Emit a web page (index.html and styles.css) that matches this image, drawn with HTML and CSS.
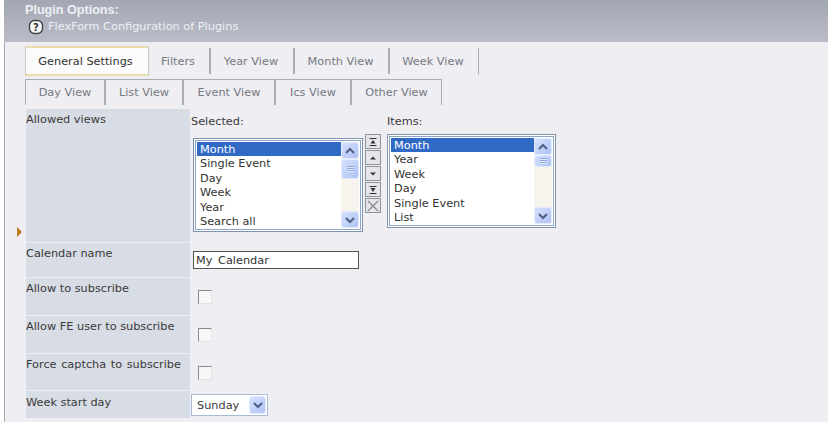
FILE: index.html
```html
<!DOCTYPE html>
<html>

<head>
    <title>Plugin Options</title>
    <link rel="stylesheet" href="styles.css">
</head>

<body>
    <svg class="defs" width="0" height="0">
        <symbol id="chev-up" viewBox="0 0 10 8"><path d="M1 6 L5 2 L9 6" fill="none" stroke="#4d6185" stroke-width="2"/></symbol>
        <symbol id="chev-down" viewBox="0 0 10 8"><path d="M1 2 L5 6 L9 2" fill="none" stroke="#4d6185" stroke-width="2"/></symbol>
    </svg>

    <div class="panel">
        <div class="head">
            <div class="head-title">Plugin Options:</div>
            <div class="head-sub">
                <svg class="help" width="16" height="16" viewBox="0 0 16 16">
                    <rect x="1.5" y="1.5" width="13" height="13" rx="5" fill="#f4f4f4" stroke="#444" stroke-width="1.4"/>
                    <text x="8" y="12" text-anchor="middle" class="help-q">?</text>
                </svg>
                FlexForm Configuration of Plugins
            </div>
        </div>

        <div class="tabs tabs-top">
            <div class="tab active">General Settings</div>
            <div class="tab tab-filters">Filters</div>
            <div class="tab tab-year">Year View</div>
            <div class="tab tab-month">Month View</div>
            <div class="tab tab-week">Week View</div>
        </div>
        <div class="tabs tabs-bottom">
            <div class="tab2 tab-day">Day View</div>
            <div class="tab2 tab-list">List View</div>
            <div class="tab2 tab-event">Event View</div>
            <div class="tab2 tab-ics">Ics View</div>
            <div class="tab2 tab-other">Other View</div>
        </div>

        <div class="form">
            <div class="row row-views">
                <div class="marker"><span class="arrow"></span></div>
                <div class="label">Allowed views</div>
                <div class="value pickers">
                    <div class="picker-selected">
                        <div class="picker-title">Selected:</div>
                        <div class="listbox">
                            <div class="list-items">
                                <div class="item sel">Month</div>
                                <div class="item">Single Event</div>
                                <div class="item">Day</div>
                                <div class="item">Week</div>
                                <div class="item">Year</div>
                                <div class="item">Search all</div>
                            </div>
                            <div class="scrollbar">
                                <div class="sb-btn"><svg width="10" height="8"><use href="#chev-up"/></svg></div>
                                <div class="sb-thumb thumb-long"><span class="grip"></span></div>
                                <div class="sb-space"></div>
                                <div class="sb-btn"><svg width="10" height="8"><use href="#chev-down"/></svg></div>
                            </div>
                        </div>
                    </div>
                    <div class="movers">
                        <div class="mover"><svg width="10" height="10" viewBox="0 0 10 10"><path d="M1.5 1.5 H8.5 M1.5 8.5 H8.5" stroke="#333" stroke-width="1.2"/><path d="M5 3 L7.5 6.5 H2.5 Z" fill="#333"/></svg></div>
                        <div class="mover"><svg width="10" height="10" viewBox="0 0 10 10"><path d="M5 3.5 L8 6.5 H2 Z" fill="#333"/></svg></div>
                        <div class="mover"><svg width="10" height="10" viewBox="0 0 10 10"><path d="M5 6.5 L8 3.5 H2 Z" fill="#333"/></svg></div>
                        <div class="mover"><svg width="10" height="10" viewBox="0 0 10 10"><path d="M1.5 1.5 H8.5 M1.5 8.5 H8.5" stroke="#333" stroke-width="1.2"/><path d="M5 7 L7.5 3 H2.5 Z" fill="#333"/></svg></div>
                        <div class="mover"><svg width="12" height="12" viewBox="0 0 12 12"><path d="M1 1 L11 11 M11 1 L1 11" stroke="#888" stroke-width="1.2"/></svg></div>
                    </div>
                    <div class="picker-items">
                        <div class="picker-title">Items:</div>
                        <div class="listbox">
                            <div class="list-items">
                                <div class="item sel">Month</div>
                                <div class="item">Year</div>
                                <div class="item">Week</div>
                                <div class="item">Day</div>
                                <div class="item">Single Event</div>
                                <div class="item">List</div>
                            </div>
                            <div class="scrollbar">
                                <div class="sb-btn"><svg width="10" height="8"><use href="#chev-up"/></svg></div>
                                <div class="sb-thumb thumb-short"><span class="grip"></span></div>
                                <div class="sb-space"></div>
                                <div class="sb-btn"><svg width="10" height="8"><use href="#chev-down"/></svg></div>
                            </div>
                        </div>
                    </div>
                </div>
            </div>

            <div class="row row-name">
                <div class="marker"></div>
                <div class="label">Calendar name</div>
                <div class="value"><input class="text-input" type="text" value="My Calendar"></div>
            </div>
            <div class="row row-check">
                <div class="marker"></div>
                <div class="label">Allow to subscribe</div>
                <div class="value"><input class="check" type="checkbox"></div>
            </div>
            <div class="row row-check">
                <div class="marker"></div>
                <div class="label">Allow FE user to subscribe</div>
                <div class="value"><input class="check" type="checkbox"></div>
            </div>
            <div class="row row-captcha">
                <div class="marker"></div>
                <div class="label label-wide">Force captcha to subscribe</div>
                <div class="value"><input class="check" type="checkbox"></div>
            </div>
            <div class="row row-week">
                <div class="marker"></div>
                <div class="label">Week start day</div>
                <div class="value">
                    <div class="dropdown">
                        <span class="dropdown-text">Sunday</span>
                        <span class="dropdown-btn"><svg width="10" height="8"><use href="#chev-down"/></svg></span>
                    </div>
                </div>
            </div>
        </div>
    </div>
</body>

</html>
```

FILE: styles.css
```css
html, body {
    margin: 0;
    padding: 0;
    height: 100%;
    overflow: hidden;
}

body {
    background-color: #ffffff;
    font-family: "DejaVu Sans", Verdana, sans-serif;
    font-size: 11.3px;
    color: #3a3a3a;
}

.defs {
    display: block;
    height: 0;
}

.panel {
    margin-left: 4px;
    height: 422px;
    background-color: #eeeef3;
    border-left: 1px solid #a4a7ae;
    box-sizing: border-box;
}

.head {
    height: 42px;
    margin-left: -1px;
    box-sizing: border-box;
    padding: 3px 0 0 21px;
    background: linear-gradient(#a3a7b3, #babdc8);
    color: #eef0f4;
}

.head-title {
    font-family: "Liberation Sans", Arial, sans-serif;
    font-weight: bold;
    font-size: 12.6px;
    line-height: 14px;
}

.head-sub {
    display: flex;
    align-items: center;
    gap: 4px;
    margin: 2px 0 0 3px;
    line-height: 16px;
}

.help-q {
    font-family: "DejaVu Sans", sans-serif;
    font-size: 10px;
    font-weight: bold;
    fill: #333;
}

.tabs {
    display: flex;
    margin-left: 20px;
}

.tabs-top {
    padding-top: 4px;
    height: 30px;
    box-sizing: content-box;
}

.tabs-bottom {
    padding-top: 3px;
    height: 26px;
}

.tab,
.tab2 {
    box-sizing: border-box;
    color: #777980;
    line-height: 26px;
    text-align: center;
    border-right: 2px solid #a9acb4;
}

.tab {
    height: 26px;
    margin-top: 2px;
    line-height: 28px;
    padding-right: 2px;
}

.tab.active {
    width: 124px;
    height: 30px;
    margin-top: 0;
    line-height: 28px;
    padding-right: 3px;
    color: #333;
    background-color: #fbfbfb;
    border-top: 2px solid #e8dcae;
    border-bottom: 2px solid #e8dcae;
    border-right: 1px solid #c9c9c9;
    border-left: 1px solid #c9c9c9;
}

.tab-filters { width: 62px; }
.tab-year { width: 84px; }
.tab-month { width: 95px; }
.tab-week { width: 89px; border-right-width: 1px; }

.tab2 {
    height: 26px;
    border-top: 1px solid #a9acb4;
}

.tab-day { width: 81px; border-left: 1px solid #a9acb4; }
.tab-list { width: 78px; }
.tab-event { width: 92px; }
.tab-ics { width: 76px; }
.tab-other { width: 90px; border-right-width: 1px; }

.form {
    padding-top: 4px;
}

.row {
    display: flex;
    margin-bottom: 1px;
    margin-left: -5px;
}

.marker {
    width: 26px;
    flex: none;
    display: flex;
    align-items: flex-end;
    justify-content: flex-start;
}

.arrow {
    width: 0;
    height: 0;
    margin: 0 0 5px 17px;
    border-left: 5px solid #c07a1a;
    border-top: 5px solid transparent;
    border-bottom: 5px solid transparent;
}

.label {
    width: 164px;
    flex: none;
    background-color: #d8dce4;
    line-height: 14px;
    padding-top: 4px;
    box-sizing: border-box;
}

.label-wide {
    word-spacing: 1px;
}

.value {
    flex: 1;
}

.row-views { height: 133px; }
.row-name { height: 34px; }
.row-check { height: 37px; }
.row-captcha { height: 36px; }
.row-week { height: 27px; }

.row-week .label {
    padding-top: 5px;
}

.pickers {
    display: flex;
    padding-left: 1px;
}

.picker-selected {
    width: 174px;
}

.picker-selected .picker-title {
    padding-top: 6px;
    height: 29px;
    line-height: 14px;
    box-sizing: border-box;
}

.picker-selected .listbox {
    margin-left: 2px;
    width: 170px;
    height: 94px;
}

.picker-items {
    margin-left: 6px;
}

.picker-items .picker-title {
    padding-top: 6px;
    height: 25px;
    line-height: 14px;
    box-sizing: border-box;
}

.picker-items .listbox {
    width: 169px;
    height: 94px;
}

.listbox {
    display: flex;
    box-sizing: border-box;
    border: 1px solid #7f93ab;
    padding: 3px;
    background-color: #fff;
    outline: 1px solid #8ca6c8;
    outline-offset: -3px;
}

.list-items {
    flex: 1;
    min-width: 0;
    overflow: hidden;
}

.item {
    height: 14.4px;
    line-height: 16px;
    padding-left: 3px;
    color: #333;
}

.item.sel {
    background-color: #316ac5;
    color: #fff;
}

.scrollbar {
    width: 18px;
    flex: none;
    display: flex;
    flex-direction: column;
    background-color: #f6f4ec;
}

.sb-btn,
.sb-thumb,
.dropdown-btn {
    display: flex;
    align-items: center;
    justify-content: center;
    background: linear-gradient(135deg, #d6e1fd, #aec2f6);
    border: 1px solid #e4ebfc;
    border-radius: 3px;
    box-sizing: border-box;
}

.sb-btn {
    height: 17px;
    flex: none;
}

.thumb-long { height: 20px; }
.thumb-short { height: 12px; }

.grip {
    width: 7px;
    height: 6px;
    background: repeating-linear-gradient(#8ea6dc 0, #8ea6dc 1px, #e4ebfd 1px, #e4ebfd 2px);
}

.sb-space {
    flex: 1;
}

.movers {
    display: flex;
    flex-direction: column;
    padding-top: 25px;
    gap: 1px;
    width: 16px;
}

.mover {
    width: 16px;
    height: 15px;
    flex: none;
    display: flex;
    align-items: center;
    justify-content: center;
    box-sizing: border-box;
    border: 1px solid #8f9299;
    background-color: #e6e6ea;
}

.text-input {
    display: block;
    margin: 8px 0 0 3px;
    width: 166px;
    height: 18px;
    box-sizing: border-box;
    border: 1px solid #555;
    background-color: #fff;
    padding: 0 0 0 2px;
    font-family: "DejaVu Sans", Verdana, sans-serif;
    font-size: 11.3px;
    word-spacing: 2px;
    color: #333;
}

.check {
    appearance: none;
    display: block;
    margin: 12px 0 0 8px;
    width: 14px;
    height: 14px;
    box-sizing: border-box;
    background-color: #f8f8f8;
    border: 1px solid #8a8a8a;
    border-right-color: #e4e4e4;
    border-bottom-color: #e4e4e4;
}

.dropdown {
    display: flex;
    align-items: center;
    justify-content: space-between;
    margin: 3px 0 0 1px;
    width: 77px;
    height: 22px;
    box-sizing: border-box;
    border: 1px solid #a9bcd6;
    background-color: #fff;
    padding: 1px 1px 1px 5px;
}

.dropdown-btn {
    width: 17px;
    height: 18px;
}
```
